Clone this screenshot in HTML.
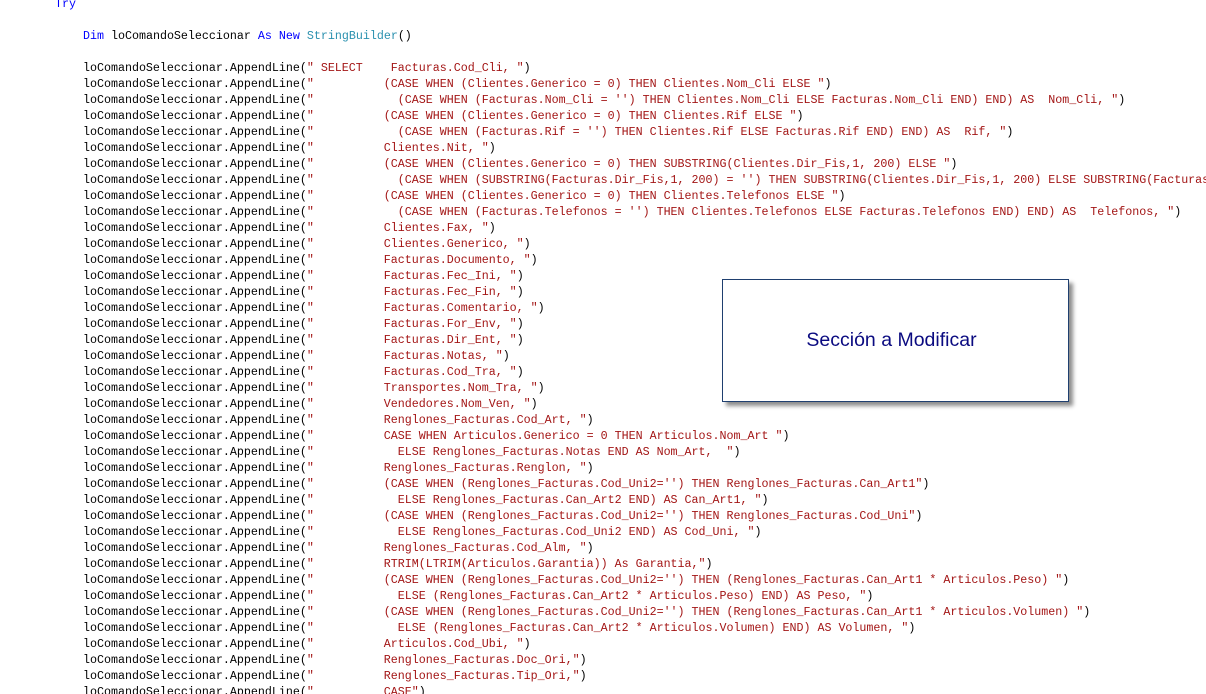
<!DOCTYPE html>
<html><head><meta charset="utf-8"><style>
html,body{margin:0;padding:0;background:#fff;width:1206px;height:694px;overflow:hidden;position:relative}
.wrap{position:absolute;left:0;top:0;width:1206px;height:694px;overflow:hidden}
pre{position:absolute;left:55px;top:-4px;margin:0;font-family:"Liberation Mono",monospace;font-size:11.67px;line-height:16px;color:#000;white-space:pre}
.k{color:#0000ff}.t{color:#2b91af}.s{color:#a31515}
.box{position:absolute;left:722px;top:279px;width:345px;height:121px;border:1px solid #1f3f6f;background:#fff;box-shadow:4px 4px 4px rgba(0,0,0,.45);font-family:"Liberation Sans",sans-serif;font-size:19.5px;color:#0a0a80;display:flex;align-items:center;justify-content:center}
.box span{position:relative;left:-4px}
</style></head><body>
<div class="wrap">
<pre><span class="k">Try</span>

    <span class="k">Dim</span> loComandoSeleccionar <span class="k">As</span> <span class="k">New</span> <span class="t">StringBuilder</span>()

    loComandoSeleccionar.AppendLine(<span class="s">" SELECT    Facturas.Cod_Cli, "</span>)
    loComandoSeleccionar.AppendLine(<span class="s">"          (CASE WHEN (Clientes.Generico = 0) THEN Clientes.Nom_Cli ELSE "</span>)
    loComandoSeleccionar.AppendLine(<span class="s">"            (CASE WHEN (Facturas.Nom_Cli = '') THEN Clientes.Nom_Cli ELSE Facturas.Nom_Cli END) END) AS  Nom_Cli, "</span>)
    loComandoSeleccionar.AppendLine(<span class="s">"          (CASE WHEN (Clientes.Generico = 0) THEN Clientes.Rif ELSE "</span>)
    loComandoSeleccionar.AppendLine(<span class="s">"            (CASE WHEN (Facturas.Rif = '') THEN Clientes.Rif ELSE Facturas.Rif END) END) AS  Rif, "</span>)
    loComandoSeleccionar.AppendLine(<span class="s">"          Clientes.Nit, "</span>)
    loComandoSeleccionar.AppendLine(<span class="s">"          (CASE WHEN (Clientes.Generico = 0) THEN SUBSTRING(Clientes.Dir_Fis,1, 200) ELSE "</span>)
    loComandoSeleccionar.AppendLine(<span class="s">"            (CASE WHEN (SUBSTRING(Facturas.Dir_Fis,1, 200) = '') THEN SUBSTRING(Clientes.Dir_Fis,1, 200) ELSE SUBSTRING(Facturas</span>
    loComandoSeleccionar.AppendLine(<span class="s">"          (CASE WHEN (Clientes.Generico = 0) THEN Clientes.Telefonos ELSE "</span>)
    loComandoSeleccionar.AppendLine(<span class="s">"            (CASE WHEN (Facturas.Telefonos = '') THEN Clientes.Telefonos ELSE Facturas.Telefonos END) END) AS  Telefonos, "</span>)
    loComandoSeleccionar.AppendLine(<span class="s">"          Clientes.Fax, "</span>)
    loComandoSeleccionar.AppendLine(<span class="s">"          Clientes.Generico, "</span>)
    loComandoSeleccionar.AppendLine(<span class="s">"          Facturas.Documento, "</span>)
    loComandoSeleccionar.AppendLine(<span class="s">"          Facturas.Fec_Ini, "</span>)
    loComandoSeleccionar.AppendLine(<span class="s">"          Facturas.Fec_Fin, "</span>)
    loComandoSeleccionar.AppendLine(<span class="s">"          Facturas.Comentario, "</span>)
    loComandoSeleccionar.AppendLine(<span class="s">"          Facturas.For_Env, "</span>)
    loComandoSeleccionar.AppendLine(<span class="s">"          Facturas.Dir_Ent, "</span>)
    loComandoSeleccionar.AppendLine(<span class="s">"          Facturas.Notas, "</span>)
    loComandoSeleccionar.AppendLine(<span class="s">"          Facturas.Cod_Tra, "</span>)
    loComandoSeleccionar.AppendLine(<span class="s">"          Transportes.Nom_Tra, "</span>)
    loComandoSeleccionar.AppendLine(<span class="s">"          Vendedores.Nom_Ven, "</span>)
    loComandoSeleccionar.AppendLine(<span class="s">"          Renglones_Facturas.Cod_Art, "</span>)
    loComandoSeleccionar.AppendLine(<span class="s">"          CASE WHEN Articulos.Generico = 0 THEN Articulos.Nom_Art "</span>)
    loComandoSeleccionar.AppendLine(<span class="s">"            ELSE Renglones_Facturas.Notas END AS Nom_Art,  "</span>)
    loComandoSeleccionar.AppendLine(<span class="s">"          Renglones_Facturas.Renglon, "</span>)
    loComandoSeleccionar.AppendLine(<span class="s">"          (CASE WHEN (Renglones_Facturas.Cod_Uni2='') THEN Renglones_Facturas.Can_Art1"</span>)
    loComandoSeleccionar.AppendLine(<span class="s">"            ELSE Renglones_Facturas.Can_Art2 END) AS Can_Art1, "</span>)
    loComandoSeleccionar.AppendLine(<span class="s">"          (CASE WHEN (Renglones_Facturas.Cod_Uni2='') THEN Renglones_Facturas.Cod_Uni"</span>)
    loComandoSeleccionar.AppendLine(<span class="s">"            ELSE Renglones_Facturas.Cod_Uni2 END) AS Cod_Uni, "</span>)
    loComandoSeleccionar.AppendLine(<span class="s">"          Renglones_Facturas.Cod_Alm, "</span>)
    loComandoSeleccionar.AppendLine(<span class="s">"          RTRIM(LTRIM(Articulos.Garantia)) As Garantia,"</span>)
    loComandoSeleccionar.AppendLine(<span class="s">"          (CASE WHEN (Renglones_Facturas.Cod_Uni2='') THEN (Renglones_Facturas.Can_Art1 * Articulos.Peso) "</span>)
    loComandoSeleccionar.AppendLine(<span class="s">"            ELSE (Renglones_Facturas.Can_Art2 * Articulos.Peso) END) AS Peso, "</span>)
    loComandoSeleccionar.AppendLine(<span class="s">"          (CASE WHEN (Renglones_Facturas.Cod_Uni2='') THEN (Renglones_Facturas.Can_Art1 * Articulos.Volumen) "</span>)
    loComandoSeleccionar.AppendLine(<span class="s">"            ELSE (Renglones_Facturas.Can_Art2 * Articulos.Volumen) END) AS Volumen, "</span>)
    loComandoSeleccionar.AppendLine(<span class="s">"          Articulos.Cod_Ubi, "</span>)
    loComandoSeleccionar.AppendLine(<span class="s">"          Renglones_Facturas.Doc_Ori,"</span>)
    loComandoSeleccionar.AppendLine(<span class="s">"          Renglones_Facturas.Tip_Ori,"</span>)
    loComandoSeleccionar.AppendLine(<span class="s">"          CASE"</span>)
</pre>
<div class="box"><span>Sección a Modificar</span></div>
</div>
</body></html>
